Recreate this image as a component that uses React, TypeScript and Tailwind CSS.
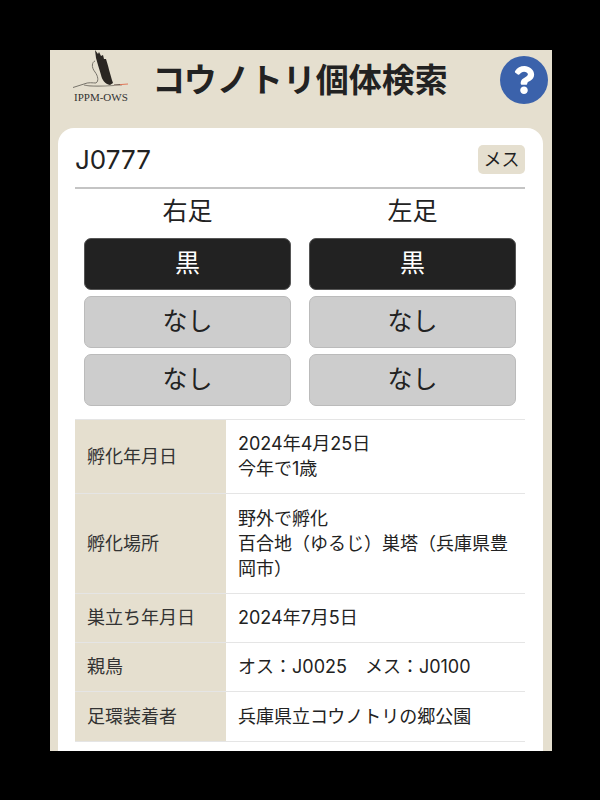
import { FaQuestion } from 'react-icons/fa'

const font = { fontFamily: 'Inter, "Noto Sans CJK JP", sans-serif' }

function Stork() {
  return (
    <svg width="60" height="40" viewBox="0 0 60 40" className="block">
      <path d="M3 37.5 L14 34 C18 32 23 33 26 33 C29 31 28 26 25 22 C21 17 22 12 25 11" fill="none" stroke="#77736a" strokeWidth="1" />
      <path d="M14 35 C22 37 30 36.5 44 35.5" fill="none" stroke="#8a857a" strokeWidth="1.2" />
      <path d="M44 35 L52 34.6" stroke="#5a4a40" strokeWidth="1.2" />
      <path d="M50 34.6 L58 34" stroke="#e0785a" strokeWidth="1" />
      <path d="M25 0 L28 4 L29 2 L31 6 L33 5 L34 9 L36 9 C38 15 40 24 43 33 L40 35 C35 34 32 30 31 25 C29 18 27 12 26 8 Z" fill="#2a2622" />
    </svg>
  )
}

function LegColumn({ title }: { title: string }) {
  return (
    <div className="flex flex-col items-stretch">
      <div className="h-[49px] pb-[3px] flex items-center justify-center text-[25px] text-[#222]">{title}</div>
      <div className="h-[52px] pb-[1px] rounded-[7px] bg-[#222] border border-[#555] flex items-center justify-center text-[25px] text-white">黒</div>
      <div className="mt-[6px] h-[52px] pb-[1px] rounded-[7px] bg-[#cdcdcd] border border-[#bbb] flex items-center justify-center text-[25px] text-[#222]">なし</div>
      <div className="mt-[6px] h-[52px] pb-[1px] rounded-[7px] bg-[#cdcdcd] border border-[#bbb] flex items-center justify-center text-[25px] text-[#222]">なし</div>
    </div>
  )
}

const rows = [
  { label: '孵化年月日', h: 'h-[74px]', lines: ['2024年4月25日', '今年で1歳'] },
  { label: '孵化場所', h: 'h-[100px]', lines: ['野外で孵化', '百合地（ゆるじ）巣塔（兵庫県豊', '岡市）'] },
  { label: '巣立ち年月日', h: 'h-[49px]', lines: ['2024年7月5日'] },
  { label: '親鳥', h: 'h-[49px]', lines: ['オス：J0025\u3000メス：J0100'] },
  { label: '足環装着者', h: 'h-[50px]', lines: ['兵庫県立コウノトリの郷公園'] },
]

export default function App(): React.ReactElement {
  return (
    <div className="w-[600px] h-[800px] bg-black pt-[50px] pl-[50px] overflow-hidden" style={font}>
      <div className="w-[502px] h-[701px] bg-[#e5dfcf] overflow-hidden">
        <div className="h-[78px] flex items-start">
          <div className="w-[100px] shrink-0 pl-[20px] flex flex-col items-start">
            <Stork />
            <div className="text-[11px] leading-[12px] ml-[4px] mt-[1px] text-[#333] whitespace-nowrap" style={{ fontFamily: '"Liberation Serif", serif' }}>IPPM-OWS</div>
          </div>
          <div className="w-[300px] shrink-0 text-center text-[33px] leading-[60px] font-bold text-[#222] whitespace-nowrap">コウノトリ個体検索</div>
          <div className="ml-[50px] mt-[6px] w-[48px] h-[48px] rounded-full bg-[#3b62ab] flex items-center justify-center text-white">
            <FaQuestion size={28} />
          </div>
        </div>
        <div className="mx-[8px] w-[485px] h-[640px] rounded-t-[16px] bg-white pl-[17px] pr-[18px]">
          <div className="h-[61px] flex items-center justify-between border-b-2 border-[#c4c4c4]">
            <div className="text-[26px] text-[#222] mt-[4px]">J0777</div>
            <div className="mt-[4px] w-[47px] h-[29px] rounded-[5px] bg-[#e5dfcf] flex items-center justify-center text-[18px] text-[#222]">メス</div>
          </div>
          <div className="px-[9px] grid grid-cols-2 gap-x-[18px]">
            <LegColumn title="右足" />
            <LegColumn title="左足" />
          </div>
          <div className="mt-[13px] border-t border-[#e5e5e5]">
            {rows.map((r) => (
              <div key={r.label} className={`flex border-b border-[#e5e5e5] ${r.h}`}>
                <div className="w-[151px] shrink-0 bg-[#e5dfcf] pl-[12px] pb-[1px] flex items-center text-[18px] text-[#333]">{r.label}</div>
                <div className="flex-1 pl-[12px] pb-[1px] flex flex-col justify-center text-[18px] leading-[25px] text-[#222]">
                  {r.lines.map((l) => (
                    <div key={l} className="whitespace-nowrap">{l}</div>
                  ))}
                </div>
              </div>
            ))}
          </div>
        </div>
      </div>
    </div>
  )
}
